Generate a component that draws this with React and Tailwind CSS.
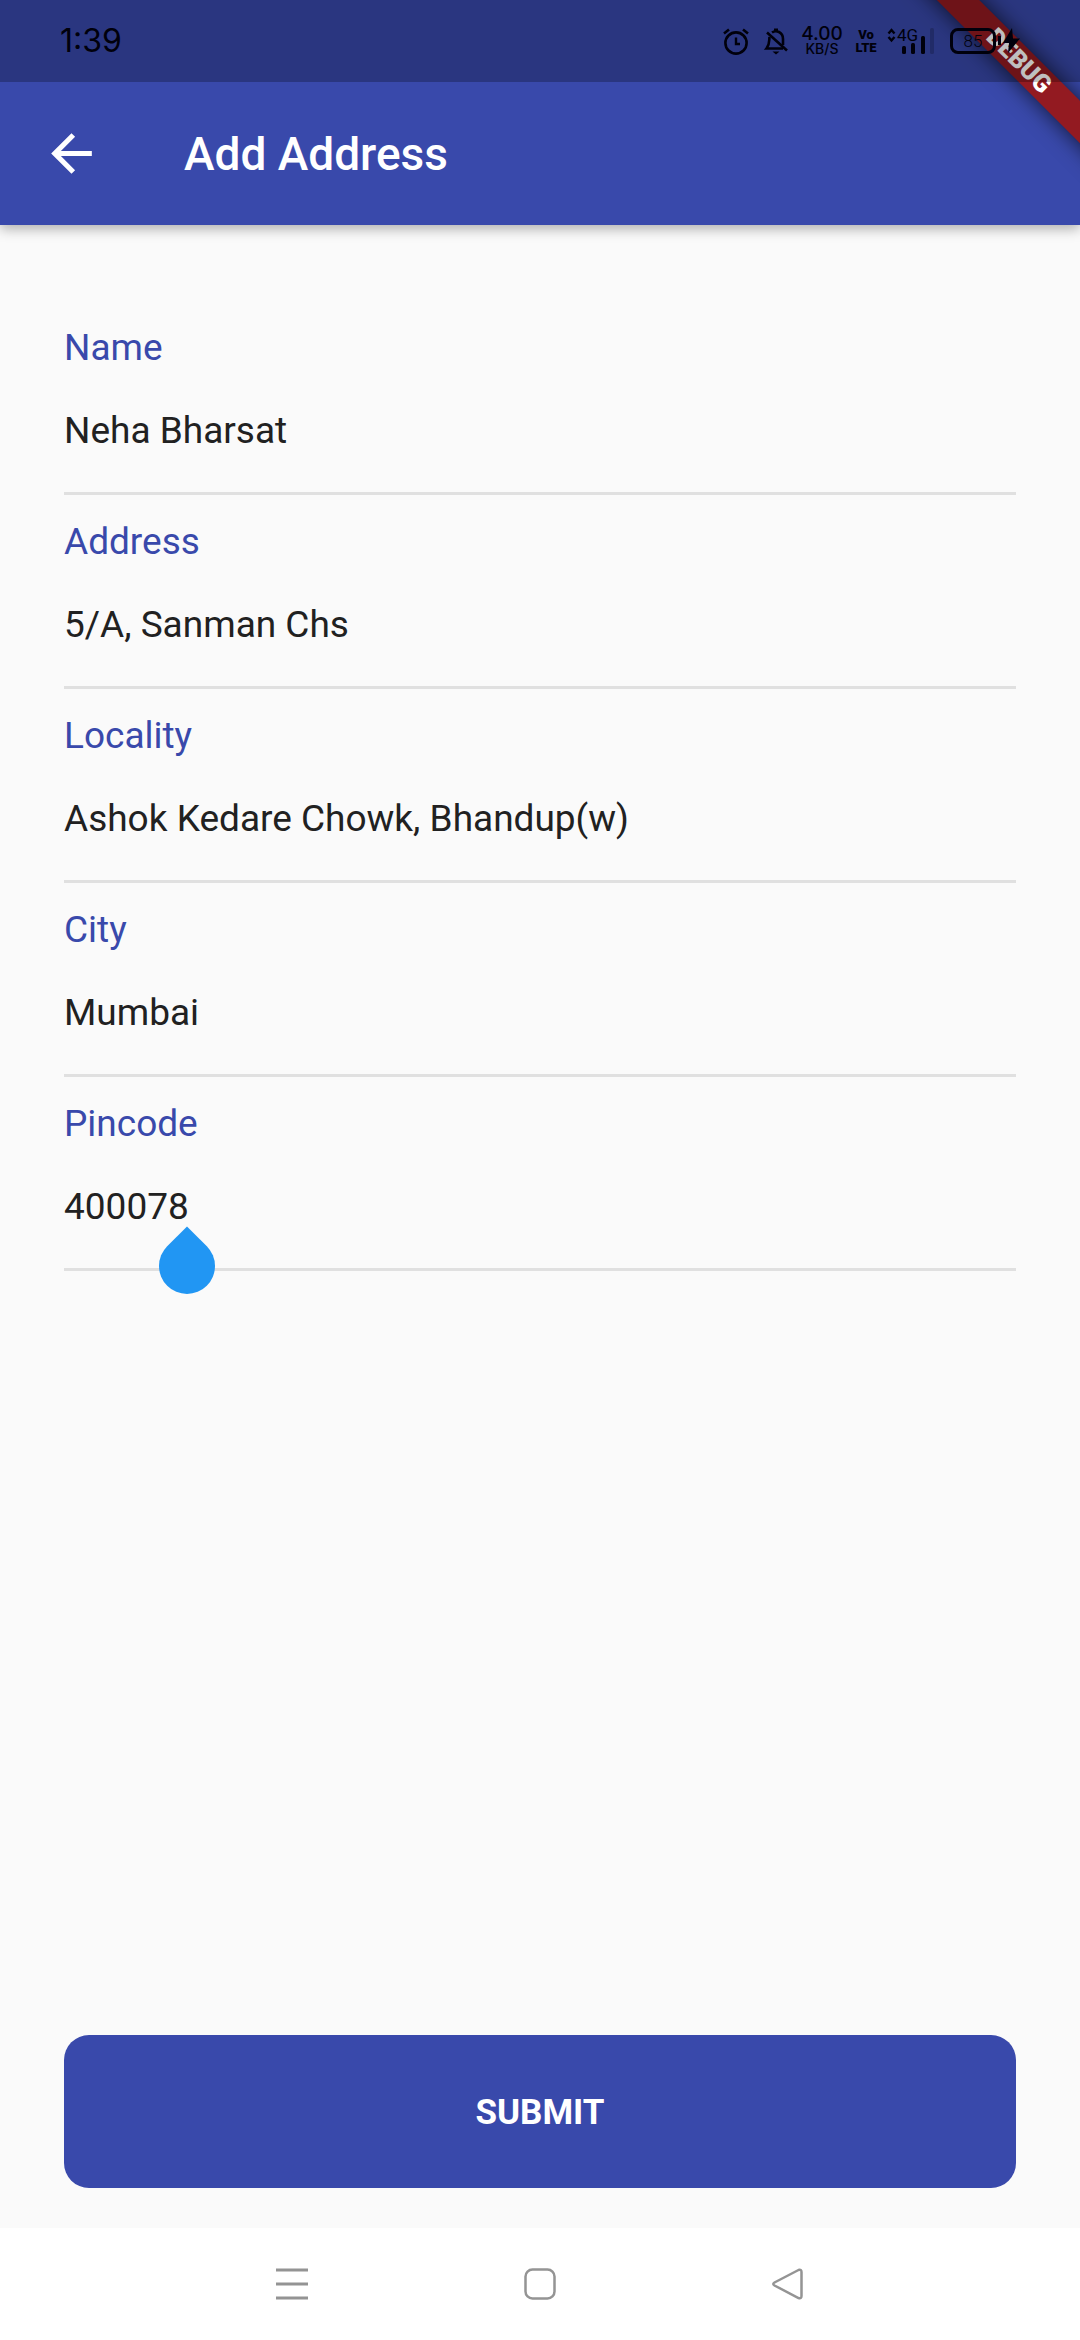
import React from "react";

const fields = [
  { id: "name", label: "Name", value: "Neha Bharsat" },
  { id: "address", label: "Address", value: "5/A, Sanman Chs" },
  { id: "locality", label: "Locality", value: "Ashok Kedare Chowk, Bhandup(w)" },
  { id: "city", label: "City", value: "Mumbai" },
  { id: "pincode", label: "Pincode", value: "400078", handle: true },
];

function AlarmIcon() {
  return (
    <svg className="h-7 w-7" viewBox="0 0 28 28" fill="none" stroke="#00000c" strokeWidth="2.6" aria-hidden="true">
      <circle cx="14" cy="16" r="10.6" />
      <path d="M14 10.500v6.500h4" strokeWidth="2.4" />
      <path d="M2 6.500 7 2.500M26 6.500 21 2.500" />
    </svg>
  );
}

function BellOffIcon() {
  return (
    <svg className="h-7 w-7" viewBox="0 0 28 28" fill="none" stroke="#00000c" strokeWidth="2.6" aria-hidden="true">
      <path d="M10 5.500C14 2.600 21 5 21 12v6M7.500 10C7 14 8 17 4.500 21.500H21" />
      <path d="M5 5.500 25 23.500" />
      <path d="M14 1.500v3" strokeWidth="4" />
      <path d="M10.500 24.500h7L14 27.500z" fill="#00000c" stroke="none" />
    </svg>
  );
}

function NetworkStatus() {
  return (
    <div className="relative ml-[11px] h-[26px] w-[48px] font-['Roboto',sans-serif] text-[17px] leading-[14px]">
      <span className="block pl-2.5">4G</span>
      <svg className="absolute inset-0 size-full" viewBox="0 0 48 26" fill="#00000c" aria-hidden="true">
        <path d="M1.500 5.500 4.500 2l3 3.500M1.500 9l3 3.500 3-3.500" fill="none" stroke="#00000c" strokeWidth="2.4" />
        <rect x="15" y="18" width="4" height="8" rx="1.500" />
        <rect x="24" y="15" width="4" height="11" rx="1.500" />
        <rect x="34" y="8" width="4" height="18" rx="1.500" />
        <rect x="43" y="0" width="4" height="26" rx="1.500" fillOpacity="0.2" />
      </svg>
    </div>
  );
}

function StatusBar() {
  return (
    <div className="relative z-20 flex h-[82px] items-center justify-between bg-black/25 px-[60px] font-['Inter',sans-serif] text-[#00000c]">
      <span className="text-[32px] leading-none">1:39</span>
      <div className="flex h-7 items-center">
        <AlarmIcon />
        <span className="ml-3"><BellOffIcon /></span>
        <div className="ml-[9px] flex w-[46px] flex-col items-center font-medium">
          <span className="text-[19px] leading-4">4.00</span>
          <span className="text-[14px] leading-[14px]">KB/S</span>
        </div>
        <div className="ml-[11px] flex w-5 flex-col items-center font-['Roboto',sans-serif] text-[13px] leading-[13px] font-black">
          <span>Vo</span>
          <span>LTE</span>
        </div>
        <NetworkStatus />
        <div className="ml-[15px] w-[46px] rounded-lg border-[3px] border-[#00000c] text-center font-['Roboto',sans-serif] text-[17px] leading-5 font-light">85</div>
        <svg className="ml-0.5 h-7 w-[22px]" viewBox="0 0 22 28" fill="#00000c" aria-hidden="true">
          <path d="M0 9h3v9H0zM14 1 5 16h6l-1 10 12-14.500h-7z" />
        </svg>
      </div>
    </div>
  );
}

function DebugBanner() {
  return (
    <div className="pointer-events-none absolute top-0 right-0 z-10 h-[240px] w-[240px] overflow-hidden">
      <div className="absolute top-[46px] left-[19px] w-80 rotate-45 bg-[#931a21] text-center text-[25px] leading-[30px] font-black text-white shadow-[0_0_22px_rgba(0,0,0,0.7)]">
        DEBUG
      </div>
    </div>
  );
}

function Field({ id, label, value, handle }) {
  return (
    <div className="flex flex-col pt-[25px] text-[37px]">
      <label htmlFor={id} className="leading-[44px] text-[#3949ab]">{label}</label>
      <div className="relative border-b-[3px] border-[#e0e0e0] pb-0.5">
        <input id={id} defaultValue={value} className="block h-[120px] w-full bg-transparent text-[#212121] outline-none" />
        {handle && (
          <span className="absolute top-[92px] left-[95px] size-14 rotate-45 rounded-full rounded-tl-none bg-[#2196f3]" />
        )}
      </div>
    </div>
  );
}

export default function App() {
  return (
    <div className="flex min-h-screen flex-col bg-[#fafafa] font-['Roboto',sans-serif]">
      <header className="relative bg-[#3949ab] shadow-[0_4px_12px_rgba(0,0,0,0.3)]">
        <StatusBar />
        <div className="flex h-[143px] items-center gap-[82px] px-[41px]">
          <button type="button" aria-label="Back" className="size-[61px]">
            <svg viewBox="0 0 24 24" className="size-full" fill="#fff" aria-hidden="true">
              <path d="M20 11H7.830l5.590-5.590L12 4l-8 8 8 8 1.410-1.410L7.830 13H20v-2z" />
            </svg>
          </button>
          <h1 className="text-[46px] leading-none font-medium text-white">Add Address</h1>
        </div>
        <DebugBanner />
      </header>

      <form className="flex flex-1 flex-col px-16 pt-[76px] pb-10" onSubmit={(e) => e.preventDefault()}>
        {fields.map((f) => (
          <Field key={f.id} {...f} />
        ))}
        <button type="submit" className="mt-auto h-[153px] rounded-[25px] bg-[#3949ab] pt-1 text-[35px] font-bold text-white">
          SUBMIT
        </button>
      </form>

      <nav className="flex h-28 items-center justify-center bg-white">
        <button type="button" aria-label="Recent apps" className="flex w-[248px] justify-center">
          <svg className="size-8" viewBox="0 0 32 32" stroke="#949494" strokeWidth="3" aria-hidden="true">
            <path d="M0 2h32M0 16h32M0 30h32" />
          </svg>
        </button>
        <button type="button" aria-label="Home" className="flex w-[248px] justify-center">
          <svg className="size-8" viewBox="0 0 32 32" fill="none" stroke="#949494" strokeWidth="2.500" aria-hidden="true">
            <rect x="1.500" y="1.500" width="29" height="29" rx="7" />
          </svg>
        </button>
        <button type="button" aria-label="Back" className="flex w-[248px] justify-center">
          <svg className="size-8" viewBox="0 0 32 32" fill="none" stroke="#949494" strokeWidth="2.500" aria-hidden="true">
            <path d="M26.500 2 2.500 14.500q-2.500 1.500 0 3L26.500 30q3 1 3-2V4q0-3-3-2z" />
          </svg>
        </button>
      </nav>
    </div>
  );
}
